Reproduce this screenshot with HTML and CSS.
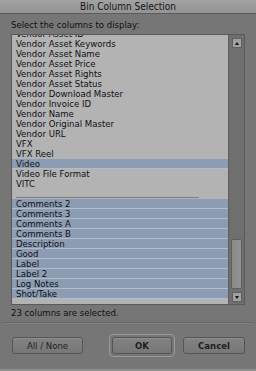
FILE: index.html
```html
<!DOCTYPE html>
<html lang="en">

<head>
    <meta charset="UTF-8" />
    <title>Bin Column Selection</title>
    <link rel="stylesheet" href="styles.css">
</head>

<body>

    <div class="window">
        <div class="titlebar">Bin Column Selection</div>

        <div class="content">
            <div class="prompt">Select the columns to display:</div>

            <div class="listbox">
                <div class="list">
                    <div class="rows">
                        <div class="row">Vendor Asset ID</div>
                        <div class="row">Vendor Asset Keywords</div>
                        <div class="row">Vendor Asset Name</div>
                        <div class="row">Vendor Asset Price</div>
                        <div class="row">Vendor Asset Rights</div>
                        <div class="row">Vendor Asset Status</div>
                        <div class="row">Vendor Download Master</div>
                        <div class="row">Vendor Invoice ID</div>
                        <div class="row">Vendor Name</div>
                        <div class="row">Vendor Original Master</div>
                        <div class="row">Vendor URL</div>
                        <div class="row">VFX</div>
                        <div class="row">VFX Reel</div>
                        <div class="row sel">Video</div>
                        <div class="row">Video File Format</div>
                        <div class="row">VITC</div>
                        <div class="row gap"><span class="divider"></span></div>
                        <div class="row sel">Comments 2</div>
                        <div class="row sel">Comments 3</div>
                        <div class="row sel">Comments A</div>
                        <div class="row sel">Comments B</div>
                        <div class="row sel">Description</div>
                        <div class="row sel">Good</div>
                        <div class="row sel">Label</div>
                        <div class="row sel">Label 2</div>
                        <div class="row sel">Log Notes</div>
                        <div class="row sel">Shot/Take</div>
                    </div>
                </div>
                <div class="scrollbar">
                    <div class="arrow up"></div>
                    <div class="track">
                        <div class="thumb"></div>
                    </div>
                    <div class="arrow down"></div>
                </div>
            </div>

            <div class="status">23 columns are selected.</div>
        </div>

        <div class="footer">
            <button class="btn all">All / None</button>
            <span class="focus"><button class="btn ok">OK</button></span>
            <button class="btn cancel">Cancel</button>
        </div>
    </div>

</body>

</html>
```

FILE: styles.css
```css
html,
body {
    margin: 0;
    padding: 0;
    background: #767676;
    font-family: 'DejaVu Sans Condensed', 'DejaVu Sans', sans-serif;
    color: #101014;
}
.window {
    width: 256px;
    height: 371px;
    display: flex;
    flex-direction: column;
    overflow: hidden;
    border-bottom: 2px solid #8e8e8e;
    box-sizing: border-box;
}
.titlebar {
    height: 13px;
    line-height: 13px;
    background: linear-gradient(#a2a2a2, #939393);
    border-bottom: 1px solid #5c5c5c;
    text-align: center;
    font-size: 10px;
    color: #141414;
}
.content {
    padding: 5px 11px 0 11px;
}
.prompt {
    font-size: 9.5px;
    line-height: 12px;
    height: 15px;
}
.listbox {
    height: 269px;
    display: flex;
    border: 1px solid #5a5a5a;
    background: #6f6f6f;
}
.list {
    flex: 1;
    background: #b3b3b3;
    overflow: hidden;
    border-right: 1px solid #5e5e5e;
}
.rows {
    margin-top: -6px;
}
.row {
    height: 10px;
    line-height: 10px;
    font-size: 9.5px;
    padding-left: 4px;
    white-space: nowrap;
}
.row.sel {
    background: #8c9db3;
    box-shadow: inset 0 -1px 0 #b1bccb;
}
.row.gap {
    position: relative;
}
.divider {
    position: absolute;
    left: 4px;
    width: 183px;
    bottom: 1px;
    height: 1px;
    background: #7d7d7d;
}
.scrollbar {
    width: 15px;
    display: flex;
    flex-direction: column;
    align-items: center;
    padding: 3px 0 2px;
    box-sizing: border-box;
}
.arrow {
    width: 10px;
    height: 10px;
    background: #a0a0a0;
    border: 1px solid #606060;
    box-sizing: border-box;
    position: relative;
}
.arrow::after {
    content: '';
    position: absolute;
    left: 2px;
    border-left: 2px solid transparent;
    border-right: 2px solid transparent;
}
.arrow.up::after { top: 3px; border-bottom: 3px solid #111; }
.arrow.down::after { top: 3px; border-top: 3px solid #111; }
.track {
    flex: 1;
    width: 11px;
    display: flex;
    flex-direction: column;
    justify-content: flex-end;
    padding-bottom: 3px;
}
.thumb {
    height: 48px;
    background: linear-gradient(90deg, #8a8a8a, #939393);
    border: 1px solid #5f5f5f;
    border-radius: 2px;
}
.status {
    font-size: 9.5px;
    line-height: 12px;
    margin-top: 2px;
    height: 15px;
}
.footer {
    margin: 0 3px;
    border-top: 1px solid #666;
    box-shadow: inset 0 1px 0 #828282;
    padding: 11px 8px 0 9px;
    display: flex;
    align-items: center;
}
.btn {
    height: 17px;
    background: linear-gradient(#828282, #777);
    border: 1px solid #555;
    border-radius: 3px;
    font-family: 'DejaVu Sans Condensed', 'DejaVu Sans', sans-serif;
    font-size: 9.5px;
    color: #1e1e1e;
    padding: 0;
    box-shadow: inset 0 1px 0 #8e8e8e;
}
.btn.all { width: 71px; }
.focus {
    margin-left: 26px;
    padding: 2px;
    border: 1px solid #9a9a9a;
    border-radius: 4px;
    display: flex;
}
.btn.ok { width: 60px; font-weight: bold; }
.btn.cancel { width: 62px; margin-left: 8px; font-weight: bold; }
```
